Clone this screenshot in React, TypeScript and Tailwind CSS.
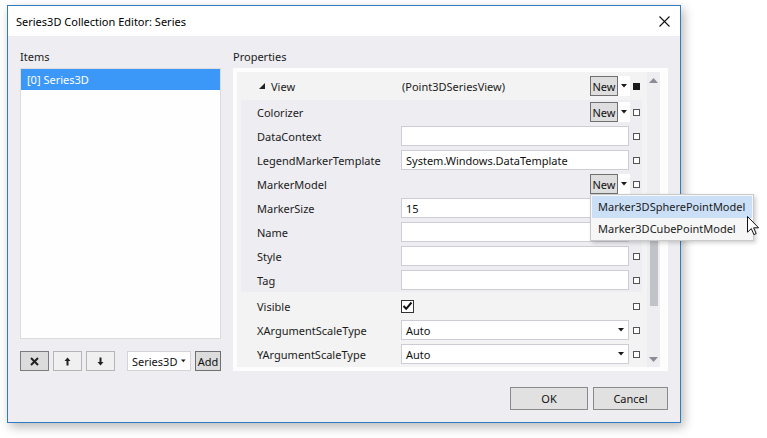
import React from "react";

const Marker = ({ filled = false }: { filled?: boolean }) => (
  <div
    className={
      filled
        ? "w-[7px] h-[7px] bg-[#1a1a1a]"
        : "w-[7px] h-[7px] border border-[#555555] bg-white"
    }
  />
);

const Tri = () => (
  <svg width="6" height="4" viewBox="0 0 6 4" className="block">
    <path d="M0 0 L6 0 L3 3.5 Z" fill="#1a1a1a" />
  </svg>
);

const NewBtn = () => (
  <div className="flex h-[20px] items-stretch">
    <div className="w-[28px] h-[20px] border border-[#707070] bg-[#dddedd] flex items-center justify-center text-[#111]">
      New
    </div>
    <div className="w-[12px] h-[20px] bg-white flex items-center justify-center">
      <Tri />
    </div>
  </div>
);

const TextBox = ({ value = "", combo = false }: { value?: string; combo?: boolean }) => (
  <div className="w-[228px] h-[20px] border border-[#cdcdd6] bg-white flex items-center pl-[4px] pr-[4px]">
    <span className="flex-1 whitespace-nowrap text-[#111]">{value}</span>
    {combo && <Tri />}
  </div>
);

const Row = ({
  name,
  children,
  nameW = 160,
  pl = 16,
  h = 24,
  filled = false,
}: {
  name: React.ReactNode;
  children?: React.ReactNode;
  nameW?: number;
  pl?: number;
  h?: number;
  filled?: boolean;
}) => (
  <div className="flex items-center" style={{ height: h }}>
    <div className="whitespace-nowrap text-[#1b1b1b]" style={{ width: nameW, paddingLeft: pl }}>
      {name}
    </div>
    <div className="w-[229px] flex items-center">{children}</div>
    <div className="w-[12px] flex justify-center">
      <Marker filled={filled} />
    </div>
  </div>
);

const Cursor = () => (
  <svg width="13" height="20" viewBox="0 0 13 20" className="block">
    <path
      d="M0.5 0.5 L0.5 16.2 L4.3 12.6 L6.9 18.6 L9.2 17.6 L6.6 11.8 L11.6 11.8 Z"
      fill="white"
      stroke="#111"
      strokeWidth="1"
      strokeLinejoin="miter"
    />
  </svg>
);

export default function App() {
  return (
    <div className="w-[767px] h-[438px] bg-white font-['Noto_Sans',sans-serif] text-[11px] leading-[15px] overflow-hidden">
      <div className="pl-[7px] pt-[5px]">
        <div className="relative w-[674px] h-[418px] border border-[#2f7cc4] bg-[#eeedf2] flex flex-col shadow-[3px_4px_10px_rgba(0,0,0,0.28)]">
          {/* Title bar */}
          <div className="h-[30px] bg-white flex items-center pl-[8px] pr-[10px] shrink-0">
            <span className="flex-1 text-[11px] text-black">Series3D Collection Editor: Series</span>
            <svg width="11" height="11" viewBox="0 0 11 11" className="block">
              <path d="M0.5 0.5 L10.5 10.5 M10.5 0.5 L0.5 10.5" stroke="#111" strokeWidth="1.1" />
            </svg>
          </div>

          {/* Body */}
          <div className="flex-1 flex flex-col pt-[12px] px-[12px] pb-[12px]">
            <div className="flex gap-[12px] h-[323px]">
              {/* Left column */}
              <div className="w-[201px] flex flex-col">
                <div className="h-[20px] pb-[3px] flex items-center text-[#1b1b1b]">Items</div>
                <div className="flex-1 border border-[#dcdcdc] bg-[#fefefe]">
                  <div className="h-[21px] bg-[#3c98f8] text-white flex items-center pl-[6px]">[0] Series3D</div>
                </div>
                <div className="mt-[12px] h-[20px] flex">
                  <div className="w-[29px] h-[20px] border border-[#7c7c7c] bg-[#dcdcdc] flex items-center justify-center">
                    <svg width="9" height="9" viewBox="0 0 9 9">
                      <path d="M1 1 L8 8 M8 1 L1 8" stroke="#222" strokeWidth="2" />
                    </svg>
                  </div>
                  <div className="ml-[4px] w-[29px] h-[20px] border border-[#b5b5b5] bg-[#f0f0f0] flex items-center justify-center">
                    <svg width="7" height="9" viewBox="0 0 7 9">
                      <path d="M3.5 0.5 L6.5 4 L4.5 4 L4.5 8.5 L2.5 8.5 L2.5 4 L0.5 4 Z" fill="#222" />
                    </svg>
                  </div>
                  <div className="ml-[4px] w-[29px] h-[20px] border border-[#b5b5b5] bg-[#f0f0f0] flex items-center justify-center">
                    <svg width="7" height="9" viewBox="0 0 7 9">
                      <path d="M3.5 8.5 L6.5 5 L4.5 5 L4.5 0.5 L2.5 0.5 L2.5 5 L0.5 5 Z" fill="#222" />
                    </svg>
                  </div>
                  <div className="ml-[12px] w-[64px] h-[20px] border border-[#d3d3d8] bg-white flex items-center pl-[4px] pr-[4px] gap-[4px]">
                    <span className="flex-1 whitespace-nowrap text-[#111]">Series3D</span>
                    <Tri />
                  </div>
                  <div className="ml-[4px] w-[26px] h-[20px] border border-[#707070] bg-[#dcdcdc] flex items-center justify-center text-[#111]">
                    Add
                  </div>
                </div>
              </div>

              {/* Right column */}
              <div className="flex-1 flex flex-col">
                <div className="h-[20px] pb-[3px] flex items-center text-[#1b1b1b]">Properties</div>
                <div className="relative flex-1 bg-[#fdfdfd] pt-[4px] pl-[4px] pb-[4px] pr-[8px] flex">
                  {/* grid */}
                  <div className="w-[410px] bg-[#f2f3f2] pr-[5px] flex flex-col">
                    <div className="flex items-center h-[28px]">
                      <div className="w-[164px] pl-[22px] flex items-center gap-[6px] text-[#1b1b1b]">
                        <svg width="6" height="6" viewBox="0 0 6 6" className="block">
                          <path d="M6 0 L6 6 L0 6 Z" fill="#222" />
                        </svg>
                        <span>View</span>
                      </div>
                      <div className="w-[229px] flex items-center">
                        <span className="flex-1 pl-[1px] whitespace-nowrap text-[#1b1b1b]">(Point3DSeriesView)</span>
                        <NewBtn />
                      </div>
                      <div className="w-[12px] flex justify-center">
                        <Marker filled />
                      </div>
                    </div>
                    <div className="ml-[4px] bg-[#eeedf2] flex flex-col">
                      <Row name="Colorizer">
                        <div className="flex-1" />
                        <NewBtn />
                      </Row>
                      <Row name="DataContext">
                        <TextBox />
                      </Row>
                      <Row name="LegendMarkerTemplate">
                        <TextBox value="System.Windows.DataTemplate" />
                      </Row>
                      <Row name="MarkerModel">
                        <div className="flex-1" />
                        <NewBtn />
                      </Row>
                      <Row name="MarkerSize">
                        <TextBox value="15" />
                      </Row>
                      <Row name="Name">
                        <TextBox />
                      </Row>
                      <Row name="Style">
                        <TextBox />
                      </Row>
                      <Row name="Tag">
                        <TextBox />
                      </Row>
                    </div>
                    <div className="pt-[2px]">
                      <Row name="Visible" nameW={164} pl={20}>
                        <div className="w-[13px] h-[13px] border border-[#333] bg-white flex items-center justify-center">
                          <svg width="11" height="10" viewBox="0 0 11 10">
                            <path d="M1.5 5 L4.2 7.8 L9.5 1.5" stroke="#111" strokeWidth="2" fill="none" />
                          </svg>
                        </div>
                      </Row>
                    </div>
                    <Row name="XArgumentScaleType" nameW={164} pl={20}>
                      <TextBox value="Auto" combo />
                    </Row>
                    <Row name="YArgumentScaleType" nameW={164} pl={20}>
                      <TextBox value="Auto" combo />
                    </Row>
                  </div>
                  {/* scrollbar */}
                  <div className="w-[13px] bg-[#eeeef0] flex flex-col items-center">
                    <div className="h-[16px] flex items-center justify-center">
                      <svg width="9" height="5" viewBox="0 0 9 5" className="block">
                        <path d="M0 5 L9 5 L4.5 0 Z" fill="#8b8d94" />
                      </svg>
                    </div>
                    <div className="h-[112px]" />
                    <div className="w-[8px] h-[106px] bg-[#c2c3c9]" />
                    <div className="flex-1" />
                    <div className="h-[16px] flex items-center justify-center">
                      <svg width="9" height="5" viewBox="0 0 9 5" className="block">
                        <path d="M0 0 L9 0 L4.5 5 Z" fill="#8b8d94" />
                      </svg>
                    </div>
                  </div>

                  {/* dropdown popup */}
                  <div className="absolute left-[357px] top-[126px] z-10 w-[164px] h-[47px] border border-[#cacaca] bg-[#f6f6f6] p-[1px] flex flex-col shadow-[2px_2px_4px_rgba(0,0,0,0.18)]">
                    <div className="h-[22px] bg-[#cbe0f7] flex items-center pl-[6px] whitespace-nowrap text-[#1b1b1b]">Marker3DSpherePointModel</div>
                    <div className="h-[22px] flex items-center pl-[6px] whitespace-nowrap text-[#1b1b1b]">Marker3DCubePointModel</div>
                    <div className="absolute left-[156px] top-[21px]">
                      <Cursor />
                    </div>
                  </div>
                </div>
              </div>
            </div>

            {/* OK / Cancel */}
            <div className="mt-[16px] h-[23px] flex justify-end">
              <div className="w-[78px] h-[23px] border border-[#8a8a8a] bg-[#e1e1e1] flex items-center justify-center text-[#111]">OK</div>
              <div className="ml-[5px] w-[75px] h-[23px] border border-[#8a8a8a] bg-[#e1e1e1] flex items-center justify-center text-[#111]">Cancel</div>
            </div>
          </div>
        </div>
      </div>
    </div>
  );
}
